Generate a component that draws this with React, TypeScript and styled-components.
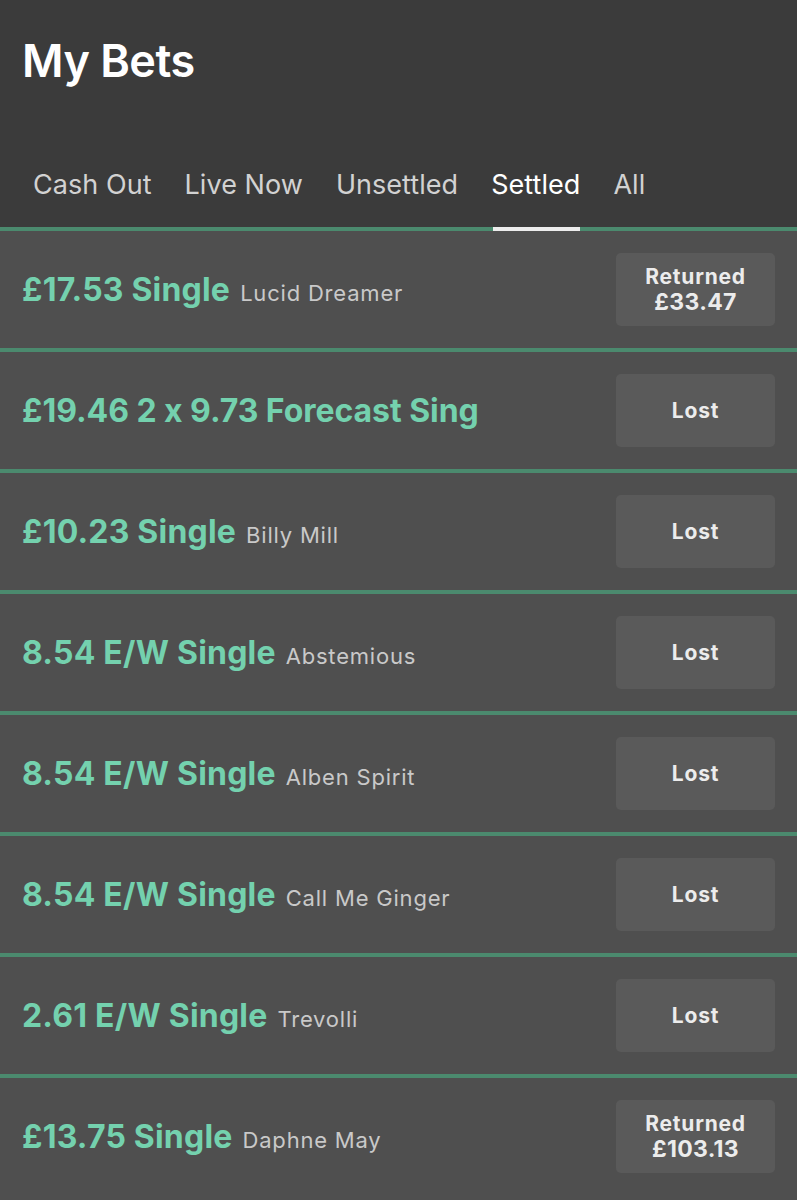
import React from "react";
import styled, { createGlobalStyle } from "styled-components";

const Global = createGlobalStyle`
  html, body { margin: 0; padding: 0; background: #4f4f4f; }
  body { font-family: Inter, "Noto Sans", sans-serif; -webkit-font-smoothing: antialiased; }
`;

const Page = styled.div`
  width: 797px;
  height: 1200px;
  overflow: hidden;
  background: #4f4f4f;
`;

const Header = styled.header`
  background: #3b3b3b;
  height: 227px;
  display: flex;
  flex-direction: column;
`;

const Title = styled.h1`
  margin: 0;
  padding: 34px 0 0 22px;
  font-size: 45px;
  font-weight: 600;
  color: #ffffff;
  line-height: 54px;
  letter-spacing: -0.5px;
`;

const Tabs = styled.nav`
  margin-top: auto;
  display: flex;
  gap: 33px;
  padding-left: 33px;
`;

const Tab = styled.div<{ $active?: boolean }>`
  position: relative;
  font-size: 27px;
  line-height: 32px;
  padding-bottom: 26px;
  letter-spacing: 0.05px;
  color: ${(p) => (p.$active ? "#ffffff" : "#d2d2d2")};
  ${(p) =>
    p.$active &&
    `&::after {
      content: "";
      position: absolute;
      left: 2px;
      right: 0;
      bottom: -4px;
      height: 4px;
      background: #ececec;
      z-index: 2;
    }`}
`;

const List = styled.div`
  display: flex;
  flex-direction: column;
`;

const Row = styled.div`
  border-top: 4px solid #4b8a6e;
  height: 117px;
  display: flex;
  align-items: center;
  justify-content: space-between;
  padding: 0 22px 0 22px;
  background: #4f4f4f;
`;

const BetText = styled.div`
  display: flex;
  align-items: baseline;
  gap: 10px;
  white-space: nowrap;
`;

const Stake = styled.span<{ $tight?: boolean }>`
  font-size: 32px;
  font-weight: 700;
  color: #74d1ae;
  letter-spacing: ${(p) => (p.$tight ? "-0.05px" : "0.2px")};
`;

const Selection = styled.span`
  font-size: 22px;
  color: #c9c9c9;
  letter-spacing: 0.8px;
`;

const Status = styled.div`
  width: 159px;
  height: 73px;
  border-radius: 5px;
  background: #5a5a5a;
  display: flex;
  flex-direction: column;
  align-items: center;
  justify-content: center;
  color: #ececec;
  font-weight: 700;
  font-size: 21px;
  line-height: 25px;
  letter-spacing: 0.8px;
`;

const StatusAmount = styled.span`
  font-size: 23px;
  line-height: 27px;
  letter-spacing: 0.3px;
`;

type Bet = { stake: string; name?: string; status: "Lost" | "Returned"; amount?: string };

const bets: Bet[] = [
  { stake: "£17.53 Single", name: "Lucid Dreamer", status: "Returned", amount: "£33.47" },
  { stake: "£19.46 2 x 9.73 Forecast Sing", status: "Lost" },
  { stake: "£10.23 Single", name: "Billy Mill", status: "Lost" },
  { stake: "8.54 E/W Single", name: "Abstemious", status: "Lost" },
  { stake: "8.54 E/W Single", name: "Alben Spirit", status: "Lost" },
  { stake: "8.54 E/W Single", name: "Call Me Ginger", status: "Lost" },
  { stake: "2.61 E/W Single", name: "Trevolli", status: "Lost" },
  { stake: "£13.75 Single", name: "Daphne May", status: "Returned", amount: "£103.13" },
];

export default function App() {
  return (
    <Page>
      <Global />
      <Header>
        <Title>My Bets</Title>
        <Tabs>
          <Tab>Cash Out</Tab>
          <Tab>Live Now</Tab>
          <Tab>Unsettled</Tab>
          <Tab $active>Settled</Tab>
          <Tab>All</Tab>
        </Tabs>
      </Header>
      <List>
        {bets.map((b, i) => (
          <Row key={i}>
            <BetText>
              <Stake $tight={!b.name}>{b.stake}</Stake>
              {b.name && <Selection>{b.name}</Selection>}
            </BetText>
            <Status>
              {b.status}
              {b.amount && <StatusAmount>{b.amount}</StatusAmount>}
            </Status>
          </Row>
        ))}
      </List>
    </Page>
  );
}
